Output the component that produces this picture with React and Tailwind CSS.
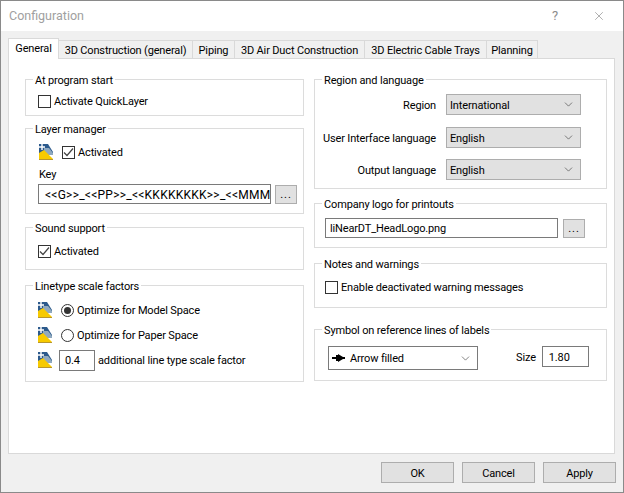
import { ChevronDown, X } from 'lucide-react';

function LayerIcon() {
  return (
    <svg width="16" height="16" viewBox="0 0 16 16" className="shrink-0">
      <path d="M1 0H10L15 8V11H1Z" fill="#2c5a8c" />
      <path d="M6 4H11L15 9V11H6Z" fill="#8fa9bf" />
      <path d="M1 9L6 6L15 15H1Z" fill="#f7ca00" />
      <path d="M1 15H15V16H1Z" fill="#b8962c" />
      <path d="M4 0V6M1 3H7" stroke="#fff" strokeWidth="1.4" />
    </svg>
  );
}

// Roboto sits a pixel higher than the reference font in a centered row
function T({ children }) {
  return <span className="pt-[2px]">{children}</span>;
}

function Group({ title, className, children }) {
  return (
    <fieldset className={`border border-[#dcdcdc] ${className}`}>
      <legend className="ml-[7px] h-[16px] px-[2px] leading-[19px]">{title}</legend>
      {children}
    </fieldset>
  );
}

function Check({ checked }) {
  return (
    <span className="flex size-[13px] shrink-0 items-center justify-center border border-[#333] bg-white">
      {checked && (
        <svg width="11" height="11" viewBox="0 0 11 11">
          <path d="M1 5.5L4 8.5L10 1.5" fill="none" stroke="#444" strokeWidth="1.2" />
        </svg>
      )}
    </span>
  );
}

function Radio({ checked }) {
  return (
    <span className="flex size-[13px] shrink-0 items-center justify-center rounded-full border border-[#333] bg-white">
      {checked && <span className="size-[7px] rounded-full bg-[#333]" />}
    </span>
  );
}

function Select({ value }) {
  return (
    <div className="flex h-[21px] w-[135px] items-center justify-between border border-[#adadad] bg-[#e1e1e1] pl-[3px] pr-[5px]">
      <T>{value}</T>
      <ChevronDown size={13} strokeWidth={1.1} color="#333" />
    </div>
  );
}

function DotsButton() {
  return <div className="flex h-[19px] w-[22px] items-center justify-center border border-[#adadad] bg-[#e1e1e1] leading-none tracking-[1px]">...</div>;
}

function DialogButton({ label }) {
  return (
    <div className="flex h-[21px] w-[73px] items-center justify-center border border-[#adadad] bg-[#e1e1e1]">
      <T>{label}</T>
    </div>
  );
}

const TABS = [
  ['3D Construction (general)', 'w-[134px]'],
  ['Piping', 'w-[42px]'],
  ['3D Air Duct Construction', 'w-[130px]'],
  ['3D Electric Cable Trays', 'w-[122px]'],
  ['Planning', 'w-[51px]'],
];

export default function App() {
  return (
    <div className="flex h-[493px] w-[624px] flex-col overflow-hidden whitespace-nowrap border-x border-b border-[#8a8a8a] bg-[#f0f0f0] text-[11px] leading-[16px] tracking-[-0.15px] text-black [font-family:'Roboto',sans-serif]">
      <div className="flex h-[31px] shrink-0 items-center justify-between border-t border-[#8a8a8a] bg-white pl-[8px] pr-[17px]">
        <span className="text-[12.5px] tracking-normal text-[#a0a0a0]">Configuration</span>
        <div className="flex items-center gap-[34px] text-[#8c8c8c]">
          <span className="text-[13px]">?</span>
          <X size={14} strokeWidth={1} color="#777" />
        </div>
      </div>

      <div className="ml-[7px] mt-[7px] flex h-[20px] items-end">
        <div className="z-10 -mb-px flex h-[21px] w-[51px] items-start justify-center border border-b-0 border-[#d9d9d9] bg-white pt-[2px]">General</div>
        {TABS.map(([label, width]) => (
          <div key={label} className={`flex h-[18px] items-center justify-center border border-b-0 border-l-0 border-[#d9d9d9] bg-[#f0f0f0] ${width}`}>
            <T>{label}</T>
          </div>
        ))}
      </div>

      <div className="ml-[7px] flex h-[396px] w-[607px] gap-[10px] border border-[#d9d9d9] bg-white pl-[16px] pt-[12px]">
        <div className="flex w-[279px] flex-col">
          <Group title="At program start" className="h-[45px]">
            <div className="flex items-center gap-[3px] pl-[12px] pt-[5px]">
              <Check />
              <T>Activate QuickLayer</T>
            </div>
          </Group>

          <Group title="Layer manager" className="mt-[4px] h-[94px]">
            <div className="flex items-center gap-[8px] pl-[12px] pt-[7px]">
              <LayerIcon />
              <div className="flex items-center gap-[3px]">
                <Check checked />
                <T>Activated</T>
              </div>
            </div>
            <div className="pl-[13px] pt-[6px]">Key</div>
            <div className="flex items-center gap-[4px] pl-[12px] pt-[1px]">
              <div className="flex h-[20px] w-[233px] items-center overflow-hidden border border-[#7a7a7a] px-[6px] text-[12px] tracking-[0.25px]">
                <T>{'<<G>>_<<PP>>_<<KKKKKKKK>>_<<MMM>>'}</T>
              </div>
              <DotsButton />
            </div>
          </Group>

          <Group title="Sound support" className="mt-[5px] h-[51px]">
            <div className="flex items-center gap-[3px] pl-[12px] pt-[7px]">
              <Check checked />
              <T>Activated</T>
            </div>
          </Group>

          <Group title="Linetype scale factors" className="mt-[7px] h-[105px]">
            <div className="flex flex-col gap-[9px] pl-[11px] pt-[9px]">
              <div className="flex h-[16px] items-center gap-[8px]">
                <LayerIcon />
                <div className="flex items-center gap-[3px]">
                  <Radio checked />
                  <T>Optimize for Model Space</T>
                </div>
              </div>
              <div className="flex h-[16px] items-center gap-[8px]">
                <LayerIcon />
                <div className="flex items-center gap-[3px]">
                  <Radio />
                  <T>Optimize for Paper Space</T>
                </div>
              </div>
              <div className="flex h-[16px] items-center gap-[6px]">
                <LayerIcon />
                <div className="flex items-center gap-[3px]">
                  <div className="flex h-[21px] w-[36px] items-center border border-[#7a7a7a] pl-[5px]">
                    <T>0.4</T>
                  </div>
                  <T>additional line type scale factor</T>
                </div>
              </div>
            </div>
          </Group>
        </div>

        <div className="flex w-[293px] flex-col">
          <Group title="Region and language" className="h-[118px]">
            <div className="flex flex-col pt-[7px]">
              <div className="flex items-center justify-end gap-[10px] pr-[25px]">
                <T>Region</T>
                <Select value="International" />
              </div>
              <div className="mt-[12px] flex items-center justify-end gap-[10px] pr-[25px]">
                <T>User Interface language</T>
                <Select value="English" />
              </div>
              <div className="mt-[11px] flex items-center justify-end gap-[10px] pr-[25px]">
                <T>Output language</T>
                <Select value="English" />
              </div>
            </div>
          </Group>

          <Group title="Company logo for printouts" className="mt-[6px] h-[53px]">
            <div className="flex items-center gap-[5px] pl-[10px] pt-[7px]">
              <div className="flex h-[20px] w-[233px] items-center border border-[#7a7a7a] px-[4px]">
                <T>liNearDT_HeadLogo.png</T>
              </div>
              <DotsButton />
            </div>
          </Group>

          <Group title="Notes and warnings" className="mt-[7px] h-[53px]">
            <div className="flex items-center gap-[3px] pl-[10px] pt-[7px]">
              <Check />
              <T>Enable deactivated warning messages</T>
            </div>
          </Group>

          <Group title="Symbol on reference lines of labels" className="mt-[13px] h-[60px]">
            <div className="flex items-start pl-[13px] pt-[9px]">
              <div className="flex h-[24px] w-[150px] items-center justify-between border border-[#7a7a7a] pl-[3px] pr-[5px]">
                <div className="flex items-center gap-[5px]">
                  <svg width="13" height="8" viewBox="0 0 13 8">
                    <path d="M0 3H4V1H6V0L11 3H13V5H11L6 8V7H4V5H0Z" fill="#000" />
                  </svg>
                  <T>Arrow filled</T>
                </div>
                <ChevronDown size={13} strokeWidth={1.1} color="#333" />
              </div>
              <span className="ml-[38px] mt-[4px]">Size</span>
              <div className="ml-[6px] flex h-[21px] w-[47px] items-center border border-[#7a7a7a] pl-[6px]">
                <T>1.80</T>
              </div>
            </div>
          </Group>
        </div>
      </div>

      <div className="flex justify-end gap-[8px] pr-[7px] pt-[8px]">
        <DialogButton label="OK" />
        <DialogButton label="Cancel" />
        <DialogButton label="Apply" />
      </div>
    </div>
  );
}
